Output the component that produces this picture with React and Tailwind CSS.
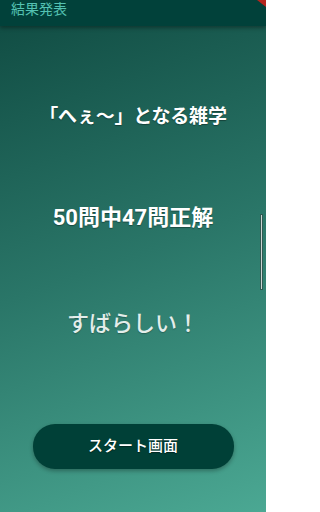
import React from "react";

export default function App() {
  const font = { fontFamily: 'Roboto, "Noto Sans CJK JP", "Noto Sans", sans-serif' };
  return (
    <div
      className="relative w-[266px] h-[512px] overflow-hidden flex flex-col bg-[linear-gradient(160deg,#0f4a41_0%,#2a7668_50%,#4ba893_100%)]"
      style={font}
    >
      <div className="relative z-10 h-[26px] shrink-0 bg-[#01413a] px-[11px] shadow-[0_2px_4px_rgba(0,0,0,0.35)]">
        <div className="text-[14px] leading-[19px] text-[#54c2b2]">結果発表</div>
      </div>
      <div className="absolute z-20 top-0 right-0 w-[9px] h-[7px] bg-[#b3261e] [clip-path:polygon(0_0,100%_0,100%_100%)]" />

      <div className="flex flex-col items-center">
        <div className="mt-[78px] text-[19px] leading-[25px] font-bold text-white tracking-[-0.2px] [text-shadow:0_1px_1px_rgba(0,0,0,0.35)]">
          「へぇ〜」となる雑学
        </div>
        <div className="mt-[74px] text-[22px] leading-[29px] font-bold text-white [text-shadow:0_1px_1px_rgba(0,0,0,0.35)]">
          50問中47問正解
        </div>
        <div className="mt-[77px] text-[22px] leading-[29px] font-medium text-[#e4eeeb] [text-shadow:0_1px_1px_rgba(0,0,0,0.25)]">
          すばらしい！
        </div>
        <button className="mt-[86px] w-[201px] h-[45px] rounded-[22px] bg-[#004037] text-white text-[15px] font-medium shadow-[0_2px_4px_rgba(0,0,0,0.3)] [text-shadow:0_1px_1px_rgba(0,0,0,0.4)]">
          スタート画面
        </button>
      </div>

      <div className="absolute left-[260px] top-[214px] w-[3px] h-[76px] bg-[#c9d3d0] border border-[#2f5a52]" />
    </div>
  );
}
